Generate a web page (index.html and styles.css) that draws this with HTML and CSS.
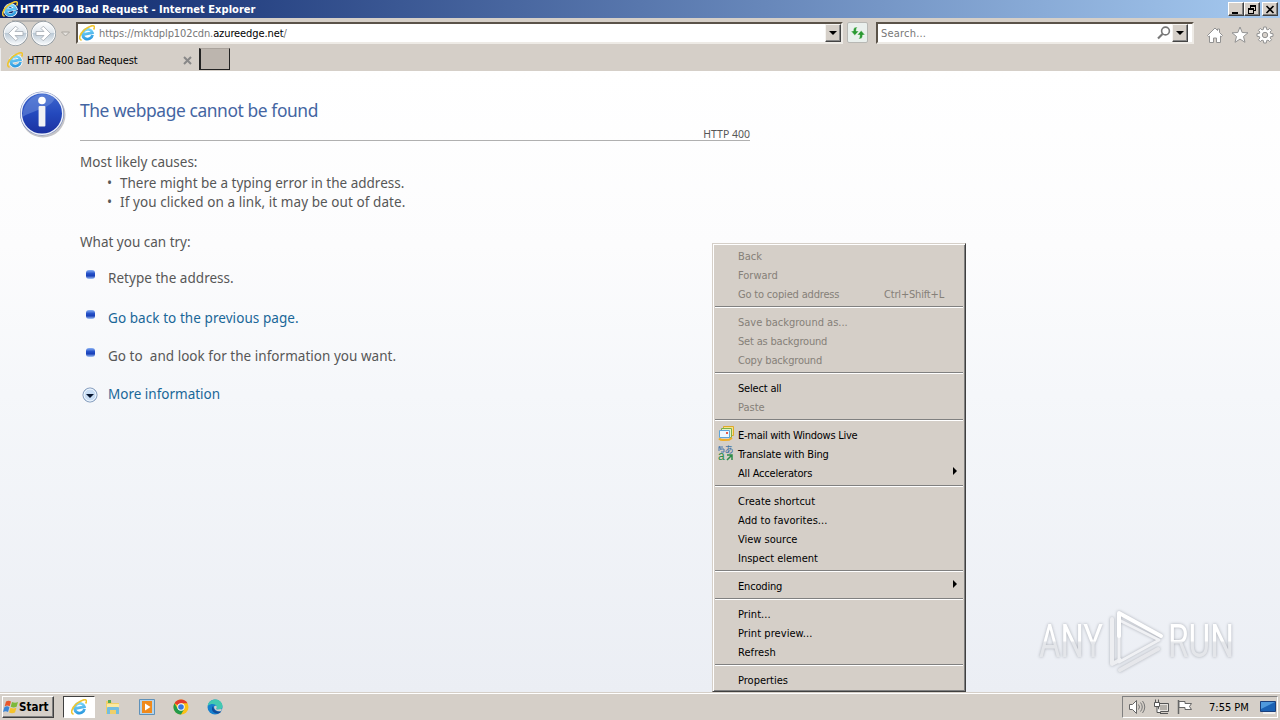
FILE: index.html
```html
<!DOCTYPE html>
<html lang="en">
<head>
    <meta charset="UTF-8">
    <title>HTTP 400 Bad Request</title>
    <link rel="stylesheet" href="styles.css">
</head>
<body>
    <svg width="0" height="0" class="defs">
        <defs>
            <linearGradient id="ieBlue" x1="0" y1="0" x2="0" y2="1">
                <stop offset="0" stop-color="#7ad6fa"/>
                <stop offset="1" stop-color="#2f9ce0"/>
            </linearGradient>
            <symbol id="ie" viewBox="0 0 16 16">
                <g transform="rotate(-12 8 8)">
                    <path d="M13.200 11A5.100 5 0 1 1 13.500 8.800H4.600" fill="none" stroke="#fff" stroke-width="3.800"/>
                    <path d="M13 11A5 4.900 0 1 1 13.300 8.800H4.800" fill="none" stroke="url(#ieBlue)" stroke-width="2.800"/>
                </g>
                <path d="M2.600 15.200C-1.200 14.400 1 8.800 5.400 4.900 9.600 1.300 14.400-.4 15.300 1.500c.4.900-.1 2-.7 3" fill="none" stroke="#f0c530" stroke-width="1.600"/>
            </symbol>
        </defs>
    </svg>

    <div class="titlebar">
        <svg class="icon16"><use href="#ie"/></svg>
        <span class="title">HTTP 400 Bad Request - Internet Explorer</span>
        <div class="win-buttons">
            <button><svg width="10" height="9"><path d="M1 7h6v2H1z"/></svg></button>
            <button><svg width="10" height="9"><path d="M3 0h6v6H7V5h1V2H4v1H3zM1 3h6v6H1zM2 5v3h4V5z" fill-rule="evenodd"/></svg></button>
            <button class="close"><svg width="10" height="9"><path d="M1.500 1l7 7M8.500 1l-7 7" stroke="#000" stroke-width="1.600"/></svg></button>
        </div>
    </div>

    <div class="navbar">
        <svg class="back-forward" width="74" height="28" viewBox="0 0 74 28">
            <defs>
                <linearGradient id="round" x1="0" y1="0" x2="0" y2="1">
                    <stop offset="0" stop-color="#fff"/>
                    <stop offset=".48" stop-color="#dde5ec"/>
                    <stop offset=".5" stop-color="#bccad6"/>
                    <stop offset="1" stop-color="#f8fafc"/>
                </linearGradient>
            </defs>
            <path d="M12 2h34" stroke="#a9a9a9" stroke-width="1.500"/>
            <circle cx="15.500" cy="14.500" r="12.500" fill="#929ca4"/>
            <circle cx="43.500" cy="14.500" r="12.500" fill="#929ca4"/>
            <circle cx="15.500" cy="14.500" r="11.300" fill="url(#round)" stroke="#fff"/>
            <circle cx="43.500" cy="14.500" r="11.300" fill="url(#round)" stroke="#fff"/>
            <path d="M23 12.500h-8l3-3-2.300-2.300-7.200 7.300 7.200 7.300 2.300-2.300-3-3h8z" fill="#fff" stroke="#a4abb2" stroke-width=".8"/>
            <path d="M36 12.500h8l-3-3 2.300-2.300 7.200 7.300-7.200 7.300-2.300-2.300 3-3h-8z" fill="#fff" stroke="#a4abb2" stroke-width=".8"/>
            <path d="M61.500 13h8l-4 4z" fill="#e6e3df" stroke="#aaa6a0"/>
        </svg>
        <div class="field address">
            <svg class="icon16"><use href="#ie"/></svg>
            <span class="url">https://mktdplp102cdn.<b>azureedge.net</b>/</span>
            <span class="drop"></span>
        </div>
        <div class="refresh">
            <svg width="16" height="14" viewBox="0 0 16 14"><path d="M7.500 1C4 1 3.300 2.500 3.300 5H.8l4 4.500L9 5H6.300c0-1.800.2-2.800 1.200-4zM8.500 13c3.500 0 4.200-1.500 4.200-4h2.500l-4-4.500L7 9h2.700c0 1.800-.2 2.800-1.200 4z" fill="#2c9a33" stroke="#fff" stroke-width=".5"/></svg>
        </div>
        <div class="field search">
            <span class="placeholder">Search...</span>
            <svg width="14" height="14"><circle cx="8.500" cy="5" r="3.900" fill="none" stroke="#777" stroke-width="1.600"/><path d="M5.500 8L1 12.500" stroke="#777" stroke-width="2.200"/></svg>
            <span class="drop"></span>
        </div>
        <div class="tools">
            <svg width="18" height="18"><path d="M1.500 9.500L9 2l2.500 2.500V3h2v3.500l3 3-1.200 1.200-.8-.7v6.500h-4V12h-3v4.500h-4V10l-.8.700z" fill="#fff" stroke="#929292"/></svg>
            <svg width="18" height="18"><path d="M9 1l2.200 5.500 5.800.3-4.500 3.700 1.500 5.800L9 13.100l-5 3.200 1.500-5.800L1 6.800l5.800-.3z" fill="#fff" stroke="#929292"/></svg>
            <svg width="18" height="18" viewBox="-9 -9 18 18">
                <g fill="#fff" stroke="#929292">
                    <path d="M-1.500-5.700L-1.300-8H1.300L1.500-5.700 3-5.100 4.700-6.600 6.600-4.700 5.100-3 5.700-1.500 8-1.300V1.300L5.700 1.500 5.100 3 6.600 4.700 4.700 6.600 3 5.100 1.500 5.700 1.300 8H-1.300L-1.500 5.700-3 5.100-4.700 6.600-6.600 4.700-5.100 3-5.700 1.500-8 1.300V-1.300L-5.700-1.500-5.100-3-6.600-4.700-4.700-6.600-3-5.100z"/>
                    <circle r="2.700" fill="#d6d0ca"/>
                </g>
            </svg>
        </div>
    </div>

    <div class="tabs">
        <div class="tab">
            <svg class="icon16"><use href="#ie"/></svg>
            <span>HTTP 400 Bad Request</span>
            <svg class="tab-close" width="9" height="9"><path d="M1 1l7 7M8 1L1 8" stroke="#888" stroke-width="2"/></svg>
        </div>
        <div class="new-tab"></div>
    </div>

    <main class="page">
        <svg class="info" width="50" height="50" viewBox="0 0 50 50">
            <defs>
                <linearGradient id="ball" x1="0" y1="0" x2="0" y2="1">
                    <stop offset="0" stop-color="#3f68cf"/>
                    <stop offset=".5" stop-color="#2449bd"/>
                    <stop offset="1" stop-color="#1b30a0"/>
                </linearGradient>
            </defs>
            <circle cx="25" cy="26" r="22.500" fill="#c4c4c8"/>
            <circle cx="24" cy="24.500" r="22" fill="#7384b8"/>
            <circle cx="24" cy="24.500" r="20.700" fill="url(#ball)" stroke="#edf1fb" stroke-width="1.400"/>
            <path d="M4.500 28C5 8 24 0 37 9 32 20 18 20 4.500 28z" fill="#7d9be0" opacity=".45"/>
            <circle cx="24" cy="11.500" r="3.800" fill="#fff"/>
            <rect x="20.600" y="17" width="6.800" height="20.500" rx="1" fill="#f1f1f4"/>
        </svg>
        <div class="content">
            <h1>The webpage cannot be found</h1>
            <div class="status">HTTP 400</div>
            <p class="causes">Most likely causes:</p>
            <ul class="cause-list">
                <li>There might be a typing error in the address.</li>
                <li class="wide">If you clicked on a link, it may be out of date.</li>
            </ul>
            <p class="try">What you can try:</p>
            <div class="step"><i class="bullet"></i><span>Retype the address.</span></div>
            <div class="step second"><i class="bullet"></i><a class="wide">Go back to the previous page.</a></div>
            <div class="step"><i class="bullet"></i><span>Go to&nbsp; and look for the information you want.</span></div>
            <div class="step more">
                <svg width="16" height="16"><circle cx="8" cy="8" r="7" fill="#c9def5" stroke="#758fb2"/><circle cx="8" cy="8" r="6" fill="none" stroke="#f3f9ff"/><path d="M4 7h8l-4 4z" fill="#06152e"/></svg>
                <a>More information</a>
            </div>
        </div>
    </main>

    <svg class="watermark" width="200" height="70" viewBox="0 0 200 70">
        <defs>
            <linearGradient id="mark" x1="0" y1="0" x2="0" y2="1">
                <stop offset=".5" stop-color="#fff"/>
                <stop offset=".54" stop-color="#e4e6ea"/>
            </linearGradient>
        </defs>
        <g fill="url(#mark)">
            <text x="2" y="52" textLength="64" lengthAdjust="spacingAndGlyphs">ANY</text>
            <text x="131" y="52" textLength="66" lengthAdjust="spacingAndGlyphs">RUN</text>
        </g>
        <g fill="none" stroke-linecap="round" stroke-linejoin="round" stroke-width="4">
            <path d="M75 14v45l8-4" stroke="#edeef1"/>
            <path d="M82 27v30l40-22-40-20" stroke="#f0f1f4" stroke-width="3"/>
            <path d="M83 65l38-21" stroke="#e6e7eb"/>
            <path d="M82 31V8l42 23" stroke="#fff"/>
        </g>
    </svg>

    <div class="menu">
        <div class="item off">Back</div>
        <div class="item off">Forward</div>
        <div class="item off tight">Go to copied address<span class="key">Ctrl+Shift+L</span></div>
        <hr>
        <div class="item off">Save background as...</div>
        <div class="item off tight">Set as background</div>
        <div class="item off tight">Copy background</div>
        <hr>
        <div class="item tight">Select all</div>
        <div class="item off">Paste</div>
        <hr>
        <div class="item tighter">
            <svg class="item-icon" width="16" height="16"><path d="M5.500.500h10v9h-10z" fill="#f7e28b" stroke="#dda928"/><path d="M3.500 2.500h10v9h-10z" fill="#e3f1c8" stroke="#7cae48"/><path d="M1.500 4.500h10v7h-10z" fill="#eef7ff" stroke="#5ea4d8"/><path d="M8 6h2v2H8z" fill="#e65b4b"/><path d="M1 12.500q2 2 5 1.500l5-.2 3-2" stroke="#f0ad26" stroke-width="2" fill="none"/></svg>
            E-mail with Windows Live
        </div>
        <div class="item tight">
            <svg class="item-icon" width="16" height="16"><path d="M1 1l2 4M1 6V2h4M3 4h3v3H3" fill="none" stroke="#4a79ad"/><text x="6.500" y="7.500" class="kana">あ</text><text x="0" y="15" class="latin">a</text><path d="M9 10h5v5M14 10l-5 5" fill="none" stroke="#2c8c4a" stroke-width="1.500"/></svg>
            Translate with Bing
        </div>
        <div class="item sub tight">All Accelerators</div>
        <hr>
        <div class="item">Create shortcut</div>
        <div class="item wide">Add to favorites...</div>
        <div class="item">View source</div>
        <div class="item">Inspect element</div>
        <hr>
        <div class="item sub tight">Encoding</div>
        <hr>
        <div class="item wide">Print...</div>
        <div class="item wide">Print preview...</div>
        <div class="item wide">Refresh</div>
        <hr>
        <div class="item">Properties</div>
    </div>

    <div class="taskbar">
        <div class="start">
            <svg width="16" height="16"><path d="M3 2.500c2-1.300 3.500-1 5 0L6.700 7.200c-1.500-1-3.200-1-5 0z" fill="#e8572a"/><path d="M9 3c2 1 4 1 6 0l-1.400 4.700c-2 1-4 1-5.900 0z" fill="#7db93c"/><path d="M1.400 8.200c2-1.200 3.500-1 5 0L5 13c-1.500-1-3.200-1-5 0z" fill="#3b86d6"/><path d="M7.400 8.700c2 1 4 1 6 0L12 13.400c-2 1-4 1-5.900 0z" fill="#f5c32c"/></svg>
            <span>Start</span>
        </div>
        <div class="task active"><svg class="icon16"><use href="#ie"/></svg></div>
        <div class="task"><svg width="16" height="16"><path d="M1 2h5l1 2h7v11H1z" fill="#efcf6a"/><path d="M3 1h3v3H3z" fill="#58a951"/><path d="M2 5h12v4H2z" fill="#fbe9a0"/><path d="M2 15V9q0-1 1-1h10q1 0 1 1v6h-3v-4H5v4z" fill="#72bde0"/></svg></div>
        <div class="task"><svg width="16" height="16"><path d="M.5.500h15v15H.5z" fill="#b4d3ea" stroke="#5f91b9"/><path d="M3 2h10v12H3z" fill="#f08a1c"/><path d="M6 4.500v7L11.500 8z" fill="#fff"/></svg></div>
        <div class="task"><svg width="16" height="16" viewBox="0 0 16 16"><circle cx="8" cy="8" r="7.500" fill="#fbc116"/><path d="M8 8L1.500 4.250A7.500 7.500 0 0 1 14.500 4.250H8z" fill="#e33b2e"/><path d="M1.500 4.250A7.500 7.500 0 0 0 8 15.500L11.200 10 8 8 4.700 9.800z" fill="#229a4b"/><circle cx="8" cy="8" r="3.700" fill="#fff"/><circle cx="8" cy="8" r="2.800" fill="#3878e0"/></svg></div>
        <div class="task"><svg width="16" height="16"><circle cx="8" cy="8" r="7.500" fill="#1680ce"/><path d="M.7 7C2-1.500 14-1.500 15.500 6.500c.4 3.500-2.500 4.500-5.500 4-1.500-.5 0-1.500-.3-2.700C9 4.500 4 4 .7 7z" fill="#43c9b1"/><path d="M6 7c-3 4 1 8.500 6 7.200 1-.3 1.900-1.300 2.300-2C10 13.500 6.500 11 6 7z" fill="#124b98"/><path d="M7 8c1-2 3-1 2.800.2-.2 1.100-1.300 2 .4 2.400l4.600-.6-.6 2c-4 1-7-1-7.200-4z" fill="#d6d0ca"/></svg></div>
        <div class="tray">
            <svg width="18" height="16"><path d="M1.500 5.500h3l4-4v13l-4-4h-3z" fill="#fff" stroke="#666"/><path d="M10.500 5.500q2 2.500 0 5M12.500 3.500q3.500 4.500 0 9M14.500 2q4.500 6 0 12" fill="none" stroke="#777"/></svg>
            <svg width="17" height="16"><path d="M5.500 4.500h10v8h-10zM7 14.500h8" fill="#e5e2de" stroke="#555"/><path d="M7 6h7v5H7z" fill="#b4b0aa"/><path d="M1.500 3.500h5v4h-5zM2.500 3V.5M5.500 3V.5M4 8v5.500h4" fill="#fff" stroke="#555"/></svg>
            <svg width="17" height="16"><path d="M1.500 1v14" stroke="#666" stroke-width="1.500"/><path d="M2 2.500h6v2h6.500l-2 3 2 3H8v-2H2z" fill="#fff" stroke="#666"/></svg>
            <span class="clock">7:55 PM</span>
            <svg width="16" height="14"><path d="M.5 1.500h15v10H.5z" fill="#1b62b4" stroke="#1a3f7c"/><path d="M1 2h14L1 9z" fill="#4f99dc"/><path d="M3 13h12" stroke="#eee" stroke-width="2"/></svg>
        </div>
    </div>
</body>
</html>
```
FILE: styles.css
```css
* {
    box-sizing: border-box;
}
body {
    margin: 0;
    width: 1280px;
    height: 720px;
    overflow: hidden;
    display: flex;
    flex-direction: column;
    background: #d5cfc8;
    font-family: "DejaVu Sans Condensed", "DejaVu Sans", sans-serif;
    font-size: 11px;
    color: #000;
}
svg {
    display: block;
    flex: none;
}
.defs {
    position: absolute;
}
.icon16 {
    width: 16px;
    height: 16px;
}
.wide {
    letter-spacing: 0.07px;
}
.tight {
    letter-spacing: -0.18px;
}
.tighter {
    letter-spacing: -0.27px;
}

/* title bar */
.titlebar {
    height: 18px;
    flex: none;
    display: flex;
    align-items: center;
    padding: 0 2px 0 2px;
    background: linear-gradient(90deg, #0a246a, #a6caf0);
    color: #fff;
    font-weight: bold;
}
.title {
    margin-left: 2px;
    letter-spacing: 0.03px;
    white-space: nowrap;
}
.win-buttons {
    margin-left: auto;
    display: flex;
}
.win-buttons button {
    width: 16px;
    height: 14px;
    padding: 1px 2px;
    background: #d5cfc8;
    border: 1px solid;
    border-color: #fff #404040 #404040 #fff;
    box-shadow: inset -1px -1px #808080;
}
.win-buttons .close {
    margin-left: 2px;
}

/* address and search */
.navbar {
    height: 30px;
    flex: none;
    display: flex;
    align-items: flex-start;
    padding-top: 1px;
}
.back-forward {
    margin-right: 2px;
}
.field {
    height: 22px;
    margin-top: 3px;
    display: flex;
    align-items: center;
    background: #fff;
    border: 2px solid;
    border-color: #5b5349 #eeebe6 #eeebe6 #5b5349;
    color: #777;
}
.address {
    width: 767px;
    padding-left: 1px;
}
.url {
    margin: 1px 0 0 4px;
    letter-spacing: -0.1px;
}
.url b {
    color: #000;
    font-weight: normal;
}
.drop {
    width: 16px;
    height: 18px;
    margin-left: auto;
    background: #d5cfc8;
    border: 1px solid;
    border-color: #f5f3f0 #444 #444 #f5f3f0;
    box-shadow: inset -1px -1px #888;
    display: flex;
    align-items: center;
    justify-content: center;
}
.drop::before {
    content: "";
    border: 4px solid transparent;
    border-top-color: #000;
    border-bottom: 0;
}
.refresh {
    width: 21px;
    height: 21px;
    margin: 3px 8px 0 4px;
    display: flex;
    align-items: center;
    justify-content: center;
    background: #eaf0ed;
    border: 1px solid #b8b8b4;
    border-radius: 2px;
}
.search {
    width: 318px;
    padding: 0 4px 0 3px;
}
.placeholder {
    margin-top: 1px;
    letter-spacing: 0.2px;
}
.search svg {
    margin: 0 1px 0 auto;
}
.search .drop {
    margin-left: 0;
}
.tools {
    display: flex;
    gap: 7px;
    margin: 7px 0 0 12px;
}

/* tabs */
.tabs {
    height: 23px;
    flex: none;
    display: flex;
}
.tab {
    width: 199px;
    display: flex;
    align-items: center;
    padding-left: 6px;
    border-left: 1px solid #eee;
}
.tab span {
    margin: 1px 0 0 4px;
    letter-spacing: -0.12px;
}
.tab-close {
    margin: 1px 7px 0 auto;
}
.new-tab {
    width: 31px;
    height: 22px;
    background: #bcb5ae;
    border: 1px solid #222;
    border-top-color: #aaa39c;
    border-left-width: 2px;
}

/* page */
.page {
    height: 621px;
    flex: none;
    display: flex;
    align-items: flex-start;
    padding: 18px 0 0 18px;
    background: linear-gradient(#fff, #fcfcfd 28%, #f5f7fa 52%, #ebeef4);
    font-family: "Noto Sans", sans-serif;
    font-size: 13.5px;
    line-height: 19px;
    color: #575757;
}
.content {
    width: 670px;
    margin-left: 12px;
}
h1 {
    margin: 8px 0 0;
    font-size: 17.4px;
    font-weight: normal;
    line-height: 26px;
    color: #4465a2;
    letter-spacing: -0.41px;
}
.status {
    height: 18px;
    border-bottom: 1px solid #b0b0b0;
    text-align: right;
    font-size: 10.5px;
    line-height: 22px;
}
p {
    margin: 0;
}
.causes {
    margin-top: 12px;
}
.cause-list {
    margin: 2px 0 0;
    padding: 0;
    list-style: none;
}
.cause-list li {
    height: 19px;
    padding-left: 27px;
}
.cause-list li::before {
    content: "•";
    display: inline-block;
    width: 13px;
    line-height: 10px;
    letter-spacing: 0;
}
.try {
    margin: 21px 0 17px;
}
.step {
    display: flex;
    height: 38px;
}
.second {
    margin-top: 2px;
}
.bullet {
    width: 9px;
    height: 9px;
    margin: 1px 13px 0 6px;
    border-radius: 3px;
    background: linear-gradient(#8bb2f5, #2450c8 40%, #183fb8 65%, #a9c8f6);
}
.step a {
    color: #1a6798;
}
.step span {
    letter-spacing: 0.03px;
}
.more svg {
    margin: 2px 10px 0 2px;
}

/* context menu */
.menu {
    position: absolute;
    left: 712px;
    top: 243px;
    width: 254px;
    height: 449px;
    padding: 2px;
    background: #d5cfc8;
    border: 1px solid;
    border-color: #d5cfc8 #404040 #404040 #d5cfc8;
    box-shadow: inset 1px 1px #fff, inset -1px -1px #808080;
}
.item {
    position: relative;
    height: 19px;
    padding-left: 23px;
    line-height: 22px;
    white-space: nowrap;
}
.off {
    color: #858078;
}
.key {
    position: absolute;
    left: 169px;
}
.item-icon {
    position: absolute;
    left: 3px;
    top: 1px;
    overflow: visible;
}
.kana {
    font: 9px "Noto Sans CJK JP", sans-serif;
    fill: #33689f;
}
.latin {
    font: 12px "Liberation Sans", sans-serif;
    fill: #2c8c4a;
}
.sub::after {
    content: "";
    position: absolute;
    right: 6px;
    top: 4px;
    border: 4px solid transparent;
    border-left: 4px solid #000;
    border-right: 0;
}
.menu hr {
    height: 2px;
    margin: 3px 0 4px;
    border: 0;
    border-top: 1px solid #808080;
    border-bottom: 1px solid #fff;
}

.watermark {
    position: absolute;
    left: 1037px;
    top: 605px;
    overflow: visible;
    filter: drop-shadow(0 0 1.5px #a9adb5);
}
.watermark text {
    font: 47px Roboto, sans-serif;
}

/* taskbar */
.taskbar {
    height: 28px;
    flex: none;
    display: flex;
    align-items: flex-start;
    padding: 3px 2px 0;
    border-top: 1px solid #d5cfc8;
    box-shadow: inset 0 1px #fff;
}
.start {
    width: 52px;
    height: 22px;
    display: flex;
    align-items: center;
    border: 1px solid;
    border-color: #fff #404040 #404040 #fff;
    box-shadow: inset -1px -1px #808080;
    font-weight: bold;
    margin-right: 9px;
}
.start span {
    font-size: 11.5px;
}
.task {
    width: 34px;
    height: 22px;
    display: flex;
    align-items: center;
    justify-content: center;
}
.active {
    width: 32px;
    margin-right: 1px;
    background: #fff;
    border: 1px solid;
    border-color: #404040 #fff #fff #404040;
}
.tray {
    width: 156px;
    height: 22px;
    margin-left: auto;
    display: flex;
    align-items: center;
    gap: 7px;
    padding-left: 5px;
    border: 1px solid;
    border-color: #808080 #fff #fff #808080;
}
.clock {
    width: 42px;
    margin: 0 2px 0 8px;
    white-space: nowrap;
}
```
